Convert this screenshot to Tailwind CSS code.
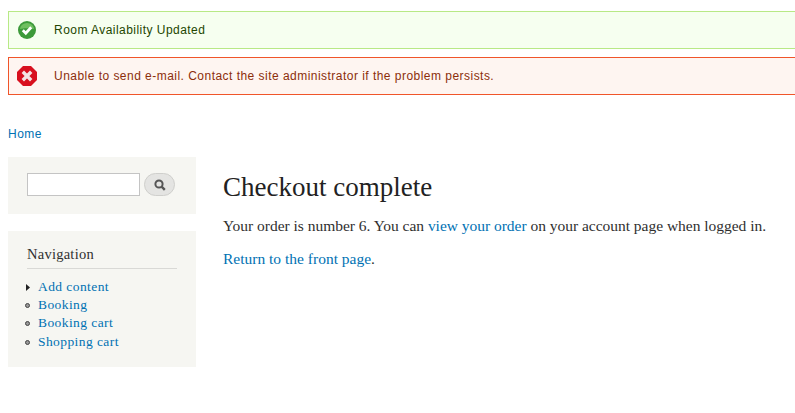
<!DOCTYPE html>
<html><head><meta charset="utf-8">
<script src="https://cdn.jsdelivr.net/npm/@tailwindcss/browser@4"></script>
</head>
<body class="bg-white overflow-hidden w-[795px] h-[413px] font-['Liberation_Serif',serif]">
<div class="pl-2 pt-[11px] w-[795px]">
  <div class="flex items-center h-[38px] w-[800px] border border-[#b8e986] bg-[#f6fff0] text-[#234600] font-['Liberation_Sans',sans-serif] text-[12px] tracking-[0.46px]">
    <svg class="ml-[9px] mr-[18px]" width="18" height="18" viewBox="0 0 18 18"><circle cx="9" cy="9" r="9" fill="#3c9a3a"/><path d="M2 8a7 6 0 0 1 14 0c-3-1-11-1-14 0z" fill="#6fbf60"/><path d="M4.8 9.2l3 3 5.4-6" fill="none" stroke="#fff" stroke-width="2.8"/></svg>
    <span>Room Availability Updated</span>
  </div>
  <div class="flex items-center h-[38px] w-[800px] mt-2 border border-[#f0552a] bg-[#fef5f1] text-[#8c2e0b] font-['Liberation_Sans',sans-serif] text-[12px] tracking-[0.47px]">
    <svg class="ml-2 mr-[17px]" width="20" height="20" viewBox="0 0 20 20"><path d="M6 0h8l6 6v8l-6 6H6l-6-6V6z" fill="#d8101f"/><path d="M5.8 5.8l8.4 8.4M14.2 5.8l-8.4 8.4" stroke="#f4e4e4" stroke-width="3.4"/></svg>
    <span>Unable to send e-mail. Contact the site administrator if the problem persists.</span>
  </div>
  <a class="block mt-[31px] h-[16px] leading-[16px] text-[#0071b3] font-['Liberation_Sans',sans-serif] text-[12px] tracking-[0.5px]">Home</a>
  <div class="flex mt-[15px]">
    <div class="w-[188px] shrink-0">
      <div class="h-[57px] bg-[#f6f6f2] flex items-center pl-[19px] pb-[2px]">
        <div class="w-[113px] h-[23px] bg-white border border-[#c4c4c4]"></div>
        <div class="ml-[4px] w-[31px] h-[23px] rounded-[12px] bg-[#e4e4e2] border border-[#cfcfcc] flex items-center justify-center">
          <svg width="14" height="14" viewBox="0 0 14 14"><circle cx="6" cy="6" r="3.6" fill="none" stroke="#555" stroke-width="2"/><path d="M8.6 8.6l3.2 3.2" stroke="#555" stroke-width="2.4"/></svg>
        </div>
      </div>
      <div class="mt-[17px] h-[136px] bg-[#f6f6f2] px-[19px] pt-[15px]">
        <div class="text-[14.5px] tracking-[0.25px] leading-[17px] text-[#2f2f2f] pb-[5px] border-b border-[#d9d9d6] w-[150px]">Navigation</div>
        <ul class="mt-[9px] text-[13.5px] tracking-[0.42px] text-[#0071b3]">
          <li class="flex items-center h-[18px] -ml-px"><svg class="mr-[8px]" width="4" height="7" viewBox="0 0 4 7"><path d="M0 0l4 3.5L0 7z" fill="#222"/></svg><span>Add content</span></li>
          <li class="flex items-center h-[18px] -ml-[2px]"><span class="w-[5px] h-[5px] rounded-full border border-[#444] bg-[#999] mr-[8px]"></span><span>Booking</span></li>
          <li class="flex items-center h-[18px] -ml-[2px]"><span class="w-[5px] h-[5px] rounded-full border border-[#444] bg-[#999] mr-[8px]"></span><span>Booking cart</span></li>
          <li class="flex items-center h-[18px] -ml-[2px] mt-px"><span class="w-[5px] h-[5px] rounded-full border border-[#444] bg-[#999] mr-[8px]"></span><span>Shopping cart</span></li>
        </ul>
      </div>
    </div>
    <div class="ml-[27px] pt-[15px] text-[#2f2f2f]">
      <h1 class="text-[27px] leading-[30px] text-[#222]">Checkout complete</h1>
      <p class="mt-[14px] text-[15.5px] leading-[20px] tracking-[-0.02px] whitespace-nowrap">Your order is number 6. You can <a class="text-[#0071b3]">view your order</a> on your account page when logged in.</p>
      <p class="mt-[13px] text-[15.5px] leading-[20px]"><a class="text-[#0071b3]">Return to the front page</a><span>.</span></p>
    </div>
  </div>
</div>
</body></html>
